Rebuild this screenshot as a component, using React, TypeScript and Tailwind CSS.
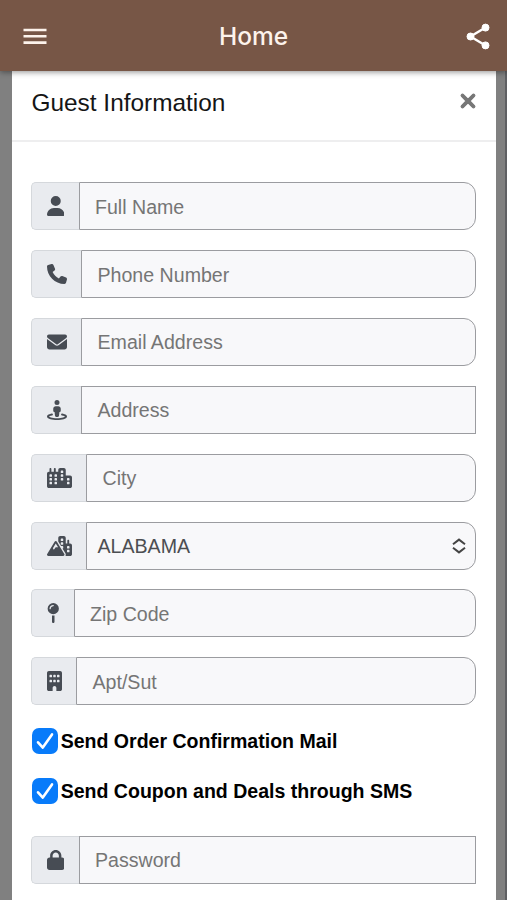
import React from "react";
import { IconType } from "react-icons";
import {
  FaBuilding,
  FaCity,
  FaEnvelope,
  FaLock,
  FaMapPin,
  FaMountainCity,
  FaPhone,
  FaStreetView,
  FaUser,
  FaXmark,
} from "react-icons/fa6";

interface Field {
  label: string;
  icon: IconType;
  iconClass: string;
  inputClass: string;
  type?: string;
}

const fields: Field[] = [
  { label: "Full Name", icon: FaUser, iconClass: "w-[17.5px]", inputClass: "rounded-r-[12px] pl-[15px]" },
  { label: "Phone Number", icon: FaPhone, iconClass: "w-[20px]", inputClass: "rounded-r-[12px] pl-[15px]" },
  { label: "Email Address", icon: FaEnvelope, iconClass: "w-[20px]", inputClass: "rounded-r-[12px] pl-[15px]" },
  { label: "Address", icon: FaStreetView, iconClass: "w-[20px]", inputClass: "pl-[15px]" },
  { label: "City", icon: FaCity, iconClass: "w-[25px]", inputClass: "rounded-r-[12px] pl-[15px]" },
];

const extraFields: Field[] = [
  { label: "Zip Code", icon: FaMapPin, iconClass: "w-[12.5px]", inputClass: "rounded-r-[12px] pl-[15px]" },
  { label: "Apt/Sut", icon: FaBuilding, iconClass: "w-[15px]", inputClass: "rounded-r-[12px] pl-[15px]" },
];

const password: Field = {
  label: "Password",
  icon: FaLock,
  iconClass: "w-[17.5px]",
  inputClass: "pl-[15px]",
  type: "password",
};

const options = ["Send Order Confirmation Mail", "Send Coupon and Deals through SMS"];

const Addon: React.FC<{ icon: IconType; iconClass: string }> = ({ icon: Icon, iconClass }) => (
  <span className="flex shrink-0 items-center rounded-l-[5px] border border-r-0 border-[#d5d8dc] bg-[#e9ebef] pr-[14.5px] pl-[14.8px] text-[#474c54]">
    <Icon className={`h-5 ${iconClass}`} />
  </span>
);

const InputRow: React.FC<{ field: Field }> = ({ field }) => (
  <div className="flex h-[48px]">
    <Addon icon={field.icon} iconClass={field.iconClass} />
    <input
      type={field.type ?? "text"}
      placeholder={field.label}
      className={`min-w-0 flex-1 border border-[#9b9ca0] bg-[#f8f8fa] pt-[2px] text-[19.6px] outline-none placeholder:text-[#757575] ${field.inputClass}`}
    />
  </div>
);

const App: React.FC = () => (
  <div className="flex h-[900px] w-[507px] flex-col overflow-hidden bg-[#808080] font-['Liberation_Sans',Arial,sans-serif] text-black">
    <header className="z-10 flex h-[71px] shrink-0 items-center justify-between bg-[#775646] pr-[17px] pl-[23px] text-white shadow-[0_1px_6px_rgba(0,0,0,0.45)]">
      <svg className="mt-px h-[17px] w-[24px]" viewBox="0 0 24 17" fill="none" stroke="#fdf3ec" strokeWidth="2.6">
        <path d="M.5 2h23M.5 8.3h23M.5 14.6h23" />
      </svg>
      <h1 className="pt-[2px] pr-[6px] font-[Inter,sans-serif] text-[24.5px] font-medium text-[#fdf3ec]">Home</h1>
      <svg className="mt-px h-[27px] w-[24px]" viewBox="0 0 24 27" fill="white" stroke="white">
        <path d="M19.5 4.5 4.5 13.5l15 9" fill="none" strokeWidth="2.4" />
        <circle cx="19.5" cy="4.6" r="3.5" />
        <circle cx="4.5" cy="13.5" r="3.5" />
        <circle cx="19.5" cy="22.4" r="3.5" />
      </svg>
    </header>

    <div className="flex min-h-0 flex-1 border-r-2 border-[#5f6063] pr-[9px] pl-[12px]">
      <main className="flex-1 bg-white">
        <div className="flex h-[71px] items-center justify-between border-b-2 border-[#eeeeef] pr-[18px] pb-[9px] pl-[19.5px]">
          <h2 className="pt-[4px] text-[24.4px] text-[#151515]">Guest Information</h2>
          <FaXmark className="h-[22px] w-[20px] text-[#777]" stroke="currentColor" strokeWidth={26} />
        </div>

        <form className="pt-[40.4px] pr-[20px] pl-[19.2px]">
          <div className="flex flex-col gap-[19.85px]">
            {fields.map((field) => (
              <InputRow key={field.label} field={field} />
            ))}
            <div className="flex h-[48px]">
              <Addon icon={FaMountainCity} iconClass="w-[25px]" />
              <div className="flex flex-1 items-center justify-between rounded-r-[12px] border border-[#9b9ca0] bg-[#f8f8fa] pt-px pr-[9px] pl-[10px] text-[19.6px] text-[#4c4e52]">
                <span className="pt-px">ALABAMA</span>
                <svg className="h-[16px] w-[14px]" viewBox="0 0 14 16" fill="none" stroke="#444" strokeWidth="2">
                  <path d="M1 6.2 7 1.6l6 4.6M1 9.8l6 4.6 6-4.6" />
                </svg>
              </div>
            </div>
            {extraFields.map((field) => (
              <InputRow key={field.label} field={field} />
            ))}
          </div>

          <div className="mt-[22.6px] mb-[31.5px] flex flex-col gap-[24.5px]">
            {options.map((option) => (
              <label key={option} className="flex h-[26px] items-center gap-[3px] pl-[1px] text-[19.55px] font-bold">
                <span className="flex h-[26px] w-[25.5px] items-center justify-center rounded-[7px] bg-[#087bfa]">
                  <svg className="h-[18px] w-[18px]" viewBox="0 0 18 18" fill="none" stroke="white" strokeWidth="2.6" strokeLinecap="round" strokeLinejoin="round">
                    <path d="M2 10.3 6.8 15.6 16 2.4" />
                  </svg>
                </span>
                <span className="pt-px">{option}</span>
              </label>
            ))}
          </div>

          <InputRow field={password} />
        </form>
      </main>
    </div>
  </div>
);

export default App;
